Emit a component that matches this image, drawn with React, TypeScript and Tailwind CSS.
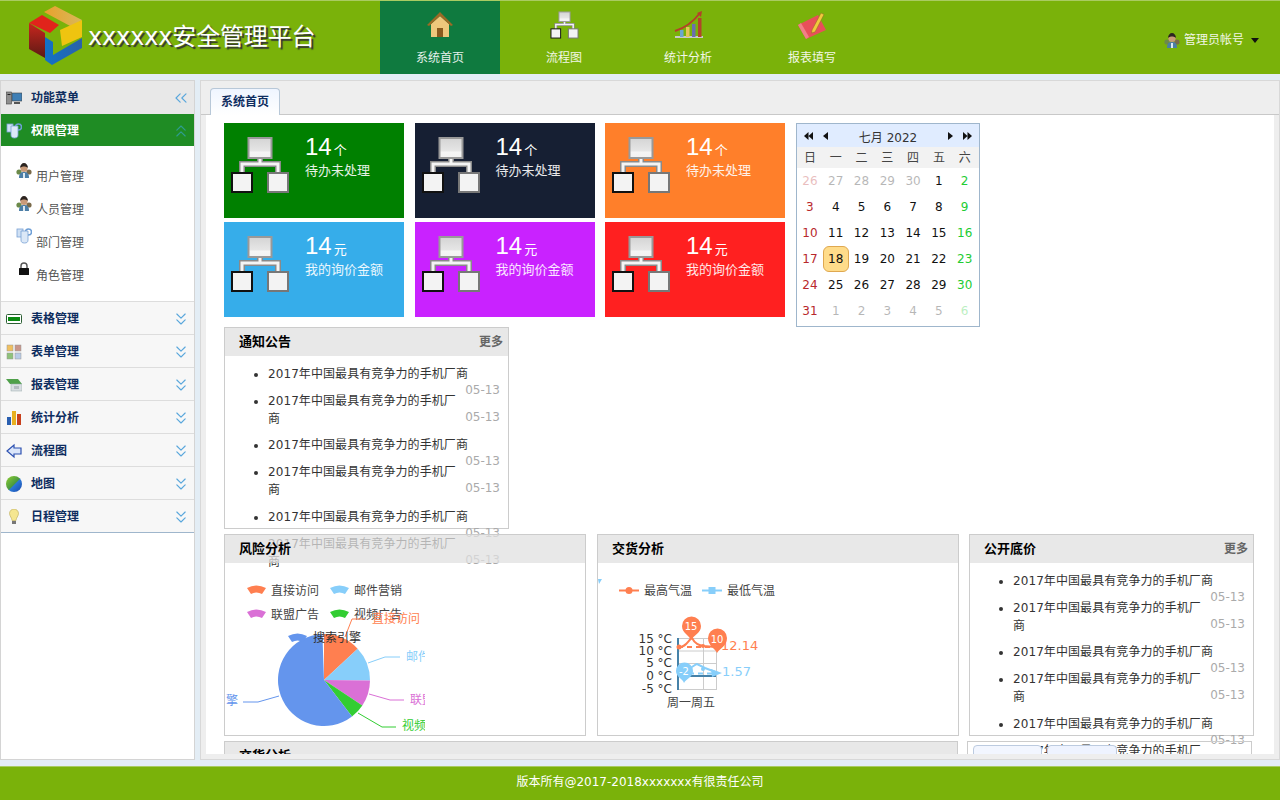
import { ChevronsDown, ChevronsLeft, ChevronsUp } from "lucide-react";
import type { ReactNode } from "react";

function Logo() {
  return (
    <svg viewBox="26 4 60 64" className="-mt-1 h-16 w-[60px] shrink-0">
      <defs>
        <linearGradient id="logoTop" x1="0" x2="1" y1="0" y2="0">
          <stop offset="0" stopColor="#e8a12c" />
          <stop offset="1" stopColor="#d8b85a" />
        </linearGradient>
        <linearGradient id="logoSide" x1="0" x2="0" y1="0" y2="1">
          <stop offset="0" stopColor="#c8261e" />
          <stop offset="1" stopColor="#5c1a14" />
        </linearGradient>
        <linearGradient id="logoBlue" x1="0" x2="1" y1="0" y2="0">
          <stop offset="0" stopColor="#1272c8" />
          <stop offset="1" stopColor="#2a62a8" />
        </linearGradient>
      </defs>
      <polygon points="44,12 55,6 82,20 72,27" fill="url(#logoTop)" />
      <polygon points="29,23 42,15 59,25 50,33" fill="#e1241b" />
      <polygon points="29,23 45,33 45,58 29,49" fill="url(#logoSide)" />
      <polygon points="60,30 82,20 82,37 62,46" fill="#efc410" />
      <polygon points="45,37 53,42 53,55 82,38 82,48 52,65 45,60" fill="url(#logoBlue)" />
    </svg>
  );
}

function FlowIcon({ className }: { className: string }) {
  return (
    <svg viewBox="0 0 60 58" className={className}>
      <defs>
        <linearGradient id="flowBox" x1="0" x2="0" y1="0" y2="1">
          <stop offset="0" stopColor="#d4d4d4" />
          <stop offset="0.65" stopColor="#e6e6e6" />
          <stop offset="0.7" stopColor="#f5f5f5" />
          <stop offset="1" stopColor="#f2f2f2" />
        </linearGradient>
      </defs>
      <path d="M30 22v6M12 37v-9h36v9" fill="none" stroke="#8a8a8a" strokeWidth="6" />
      <path d="M30 22v6M12 37v-9h36v9" fill="none" stroke="#f4f4f4" strokeWidth="3" />
      <rect x="18.5" y="2" width="23" height="20" fill="url(#flowBox)" stroke="#999" strokeWidth="2" />
      <rect x="2" y="37" width="20" height="19" fill="#f3f3f3" stroke="#111" strokeWidth="2" />
      <rect x="38" y="37" width="20" height="19" fill="#f3f3f3" stroke="#777" strokeWidth="2" />
    </svg>
  );
}

function HouseIcon() {
  return (
    <svg viewBox="0 0 28 28" className="h-7 w-7">
      <path d="M5 13v13h18V13L14 5z" fill="#eec77c" />
      <path d="M1 14 14 1l13 13-2 1L14 5 3 15z" fill="#9a6a26" />
      <rect x="11" y="17" width="6" height="9" fill="#8a5a1e" />
    </svg>
  );
}

function ChartIcon() {
  return (
    <svg viewBox="0 0 30 30" className="h-[30px] w-[30px]">
      <rect x="2" y="26" width="28" height="2" fill="#c9c9c9" />
      <rect x="7" y="20" width="3.5" height="7" fill="#6ba7d0" />
      <rect x="13" y="17" width="3.5" height="10" fill="#e5c45a" />
      <rect x="19" y="14" width="3.5" height="13" fill="#6a6fb0" />
      <rect x="25" y="8" width="3.5" height="19" fill="#b2452a" />
      <path d="M2 21C12 18 20 12 27 3" fill="none" stroke="#b5402a" strokeWidth="2" />
      <polygon points="24,3 29,1 28,7" fill="#b5402a" />
    </svg>
  );
}

function NoteIcon() {
  return (
    <svg viewBox="0 0 30 30" className="h-[30px] w-[30px]">
      <polygon points="1,15 21,5 29,20 9,29" fill="#e8505a" />
      <polygon points="1,15 4,13 12,27 9,29" fill="#f08088" />
      <path d="M15 20 24 3l3 1.5L18 22l-3.5 1z" fill="#f2c83c" stroke="#8a6a20" strokeWidth="0.5" />
    </svg>
  );
}

function UserIcon() {
  return (
    <svg viewBox="0 0 16 16" className="h-4 w-4">
      <circle cx="3" cy="10" r="2.6" fill="#6c8a4a" />
      <circle cx="13" cy="10" r="2.6" fill="#7a6a4a" />
      <path d="M3 16c0-5 2-6 5-6s5 1 5 6z" fill="#4c7ea6" />
      <rect x="7" y="11" width="2" height="5" fill="#dde8f0" />
      <circle cx="8" cy="6.5" r="3.6" fill="#c99a78" />
      <path d="M4 6c0-3 2-5 4-5s4 2 4 5c-2-2-6-2-8 0z" fill="#2c2420" />
    </svg>
  );
}

function CupsIcon() {
  return (
    <svg viewBox="0 0 16 16" className="h-4 w-4">
      <circle cx="12.5" cy="4" r="3" fill="none" stroke="#6f9fd6" strokeWidth="1.5" />
      <rect x="1" y="1" width="6" height="8" fill="#cfe0f4" stroke="#7aa2d4" strokeWidth="0.8" />
      <path d="M5 3h7v9c0 2-1 3-3.5 3S5 14 5 12z" fill="#dbe8f7" stroke="#7aa2d4" strokeWidth="0.8" />
    </svg>
  );
}

function LockIcon() {
  return (
    <svg viewBox="0 0 16 16" className="h-4 w-4">
      <path d="M5 7V5a3 3 0 0 1 6 0v2" fill="none" stroke="#555" strokeWidth="1.4" />
      <rect x="3" y="7" width="10" height="7" rx="0.5" fill="#111" />
    </svg>
  );
}

const menuIcons: Record<string, ReactNode> = {
  desk: (
    <svg viewBox="0 0 16 16" className="h-4 w-4">
      <rect x="0.5" y="2" width="5" height="12" fill="#8e8e8e" stroke="#444" strokeWidth="0.6" />
      <rect x="1.5" y="4" width="3" height="1" fill="#222" />
      <rect x="6" y="3" width="10" height="8" fill="#3f7fb5" stroke="#444" strokeWidth="0.6" />
      <rect x="8" y="12" width="6" height="2" fill="#555" />
    </svg>
  ),
  table: (
    <svg viewBox="0 0 16 16" className="h-4 w-4">
      <rect x="0.5" y="3.5" width="15" height="9" rx="1" fill="#fff" stroke="#2b5f33" />
      <rect x="2" y="6" width="12" height="4" fill="#0b8a12" />
    </svg>
  ),
  form: (
    <svg viewBox="0 0 16 16" className="h-4 w-4">
      <rect x="1" y="1" width="6" height="6" fill="#f0c060" stroke="#999" strokeWidth="0.5" />
      <rect x="9" y="1" width="6" height="6" fill="#c9968a" stroke="#999" strokeWidth="0.5" />
      <rect x="1" y="9" width="6" height="6" fill="#8fc27a" stroke="#999" strokeWidth="0.5" />
      <rect x="9" y="9" width="6" height="6" fill="#b8cbe6" stroke="#999" strokeWidth="0.5" />
    </svg>
  ),
  report: (
    <svg viewBox="0 0 16 16" className="h-4 w-4">
      <polygon points="0,2 12,2 16,7 4,7" fill="#4fa04a" />
      <rect x="5" y="7" width="11" height="7" fill="#d9dee2" stroke="#9aa" strokeWidth="0.5" />
      <rect x="8" y="9" width="5" height="3" fill="#b5bcc2" />
    </svg>
  ),
  bars: (
    <svg viewBox="0 0 16 16" className="h-4 w-4">
      <rect x="1" y="7" width="4" height="8" fill="#2a5fb0" />
      <rect x="6" y="1" width="4" height="14" fill="#e8b020" />
      <rect x="11" y="4" width="4" height="11" fill="#c8401c" />
    </svg>
  ),
  back: (
    <svg viewBox="0 0 16 16" className="h-4 w-4">
      <path d="M1 8 8 2v3h7v6H8v3z" fill="#dbe6fa" stroke="#2c50b0" strokeWidth="1.2" />
    </svg>
  ),
  globe: (
    <svg viewBox="0 0 16 16" className="h-4 w-4">
      <defs>
        <linearGradient id="globeFill" x1="0" x2="1" y1="0" y2="1">
          <stop offset="0" stopColor="#8fd030" />
          <stop offset="0.5" stopColor="#4a9a40" />
          <stop offset="0.55" stopColor="#2a78d8" />
          <stop offset="1" stopColor="#1a48a8" />
        </linearGradient>
      </defs>
      <circle cx="8" cy="8" r="8" fill="url(#globeFill)" />
    </svg>
  ),
  bulb: (
    <svg viewBox="0 0 16 16" className="h-4 w-4">
      <path d="M8 0a4.5 4.5 0 0 0-4.5 4.5C3.500 7 6 9 6 11.500h4C10 9 12.500 7 12.500 4.500A4.500 4.500 0 0 0 8 0z" fill="#f5e690" stroke="#b8a850" strokeWidth="0.6" />
      <rect x="6" y="12" width="4" height="3" fill="#777" />
    </svg>
  ),
};

const accordions = [
  { label: "表格管理", icon: "table" },
  { label: "表单管理", icon: "form" },
  { label: "报表管理", icon: "report" },
  { label: "统计分析", icon: "bars" },
  { label: "流程图", icon: "back" },
  { label: "地图", icon: "globe" },
  { label: "日程管理", icon: "bulb" },
];

const subItems = [
  { label: "用户管理", icon: <UserIcon /> },
  { label: "人员管理", icon: <UserIcon /> },
  { label: "部门管理", icon: <CupsIcon /> },
  { label: "角色管理", icon: <LockIcon /> },
];

const navItems = [
  { label: "系统首页", icon: <HouseIcon />, active: true },
  { label: "流程图", icon: <FlowIcon className="h-7 w-[29px]" /> },
  { label: "统计分析", icon: <ChartIcon /> },
  { label: "报表填写", icon: <NoteIcon /> },
];

const tiles = [
  { bg: "bg-[#008000]", unit: "个", label: "待办未处理" },
  { bg: "bg-[#161f33]", unit: "个", label: "待办未处理" },
  { bg: "bg-[#ff7f2a]", unit: "个", label: "待办未处理" },
  { bg: "bg-[#36adea]", unit: "元", label: "我的询价金额" },
  { bg: "bg-[#c922ff]", unit: "元", label: "我的询价金额" },
  { bg: "bg-[#ff2020]", unit: "元", label: "我的询价金额" },
];

const calendarDays = [
  26, 27, 28, 29, 30, 1, 2, 3, 4, 5, 6, 7, 8, 9, 10, 11, 12, 13, 14, 15, 16, 17, 18, 19, 20, 21, 22, 23, 24, 25, 26, 27,
  28, 29, 30, 31, 1, 2, 3, 4, 5, 6,
];

function Calendar() {
  return (
    <div className="h-[204px] w-[184px] shrink-0 border border-[#9fb6cc] bg-white">
      <div className="flex h-[23px] items-center justify-between bg-[#e0ecff] px-[7px] text-[#333]">
        <span className="flex items-center gap-[10px]">
          <svg viewBox="0 0 9 8" className="h-2 w-[9px]">
            <path d="M4.500 0v8L0 4zM9 0v8L4.500 4z" fill="#111" />
          </svg>
          <svg viewBox="0 0 5 8" className="h-2 w-[5px]">
            <path d="M5 0v8L0 4z" fill="#111" />
          </svg>
        </span>
        <span className="pt-[5px]">七月 2022</span>
        <span className="flex items-center gap-[10px]">
          <svg viewBox="0 0 5 8" className="h-2 w-[5px]">
            <path d="M0 0v8l5-4z" fill="#111" />
          </svg>
          <svg viewBox="0 0 9 8" className="h-2 w-[9px]">
            <path d="M0 0v8l4.500-4zM4.500 0v8L9 4z" fill="#111" />
          </svg>
        </span>
      </div>
      <div className="grid h-[21px] grid-cols-[repeat(7,25.8px)] items-center bg-[#f2f2f2] text-center text-[#444]">
        {["日", "一", "二", "三", "四", "五", "六"].map((day) => (
          <span key={day}>{day}</span>
        ))}
      </div>
      <div className="grid grid-cols-[repeat(7,25.8px)] auto-rows-[26px] text-center">
        {calendarDays.map((day, index) => {
          const muted = index < 5 || index > 35;
          const color = index % 7 === 0 ? "text-[#b8282c]" : index % 7 === 6 ? "text-[#22cc33]" : "text-[#111]";
          const selected = index === 22;
          return (
            <span
              key={index}
              className={`flex items-center justify-center ${color} ${muted ? "opacity-30" : ""} ${
                selected ? "rounded-md border border-[#dfa850] bg-[#ffdc8a]" : ""
              }`}
            >
              {day}
            </span>
          );
        })}
      </div>
    </div>
  );
}

function NewsList() {
  return (
    <ul className="list-disc pt-[10px] pr-2 pl-[43px] leading-[17.83px] text-[#333]">
      {[0, 1, 2, 3, 4, 5].map((item) => (
        <li key={item} className="mb-[9px] tracking-[0.08px]">
          2017年中国最具有竞争力的手机厂商
          <span className="float-right -mt-[2px] tracking-normal text-[#aaa]">05-13</span>
        </li>
      ))}
    </ul>
  );
}

function Panel({
  title,
  more,
  className,
  children,
}: {
  title: string;
  more?: boolean;
  className: string;
  children: ReactNode;
}) {
  return (
    <section className={`h-[202px] shrink-0 border border-[#ccc] ${className}`}>
      <header className="flex h-7 items-center justify-between bg-[#e0e0e0]/75 pr-[5px] pl-[14px]">
        <h3 className="text-[13px] font-bold text-black">{title}</h3>
        {more && <span className="font-bold text-[#666]">更多</span>}
      </header>
      {children}
    </section>
  );
}

function polar(angle: number, radius: number) {
  const rad = ((angle - 90) * Math.PI) / 180;
  return `${324 + radius * Math.cos(rad)} ${680 + radius * Math.sin(rad)}`;
}

const slices = [
  { from: 0, to: 47, fill: "#ff7f50" },
  { from: 47, to: 90.6, fill: "#87cefa" },
  { from: 90.6, to: 123.5, fill: "#da70d6" },
  { from: 123.5, to: 142.5, fill: "#32cd32" },
  { from: 142.5, to: 358, fill: "#6495ed" },
];

function Fan({ x, y, fill }: { x: number; y: number; fill: string }) {
  return (
    <path
      d={`M${x} ${y - 2}q9.500-5 19 0l-4 6q-5.500-3-11 0z`}
      fill={fill}
    />
  );
}

function PieChart() {
  return (
    <svg viewBox="225 563 200 172" className="block h-[172px] w-[200px]">
      <Fan x={247} y={590} fill="#ff7f50" />
      <Fan x={330} y={590} fill="#87cefa" />
      <Fan x={247} y={614} fill="#da70d6" />
      <Fan x={330} y={614} fill="#32cd32" />
      <g fontSize="12" fill="#444">
        <text x="271" y="595">直接访问</text>
        <text x="354" y="595">邮件营销</text>
        <text x="271" y="619">联盟广告</text>
        <text x="354" y="619">视频广告</text>
      </g>
      {slices.map((slice) => (
        <path
          key={slice.fill}
          d={`M324 680L${polar(slice.from, 46)}A46 46 0 ${slice.to - slice.from > 180 ? 1 : 0} 1 ${polar(slice.to, 46)}Z`}
          fill={slice.fill}
        />
      ))}
      <Fan x={288} y={638} fill="#6495ed" />
      <g fill="none" strokeWidth="1">
        <path d="M345 637 352 619H365" stroke="#ff7f50" />
        <path d="M368 663 385 657H400" stroke="#87cefa" />
        <path d="M369 694 390 700H404" stroke="#da70d6" />
        <path d="M358 713 382 727H396" stroke="#32cd32" />
        <path d="M279 696 258 702H243" stroke="#6495ed" />
      </g>
      <g fontSize="12">
        <text x="372" y="623" fill="#ff7f50">直接访问</text>
        <text x="406" y="661" fill="#87cefa">邮件营销</text>
        <text x="410" y="704" fill="#da70d6">联盟广告</text>
        <text x="402" y="730" fill="#32cd32">视频广告</text>
        <text x="190" y="705" fill="#6495ed">搜索引擎</text>
        <text x="313" y="642" fill="#333">搜索引擎</text>
      </g>
    </svg>
  );
}

function LineChart() {
  return (
    <svg viewBox="598 563 200 172" className="block h-[172px] w-[200px]">
      <polygon points="598,579 602,579 599,584" fill="#87cefa" />
      <path d="M619 590.500H639" stroke="#ff7f50" strokeWidth="2" />
      <circle cx="629" cy="590.500" r="3.500" fill="#ff7f50" />
      <path d="M702 590.500H722" stroke="#87cefa" strokeWidth="2" />
      <rect x="708.500" y="587" width="7" height="7" fill="#87cefa" />
      <g fontSize="12" fill="#444">
        <text x="644" y="595">最高气温</text>
        <text x="727" y="595">最低气温</text>
      </g>
      <g fontSize="12" fill="#333" textAnchor="end">
        <text x="672" y="643">15 °C</text>
        <text x="672" y="655">10 °C</text>
        <text x="672" y="667">5 °C</text>
        <text x="672" y="680">0 °C</text>
        <text x="672" y="693">-5 °C</text>
      </g>
      <path d="M678 638.500H716.500M678 651H716.500M678 663.500H716.500M678 689.500H716.500M703.500 638V690M716.500 638V690" stroke="#ccc" fill="none" />
      <path d="M678 638V690" stroke="#4682a9" strokeWidth="2" />
      <path d="M678 676H716" stroke="#4682a9" strokeWidth="2" />
      <path d="M678 647C686 648 688 640 692 638C695 644 699 645 703 646L716 647" fill="none" stroke="#ff7f50" strokeWidth="2" />
      <path d="M678 647H716" stroke="#ff7f50" strokeWidth="2" strokeDasharray="5 4" />
      <circle cx="679" cy="647" r="2.500" fill="#ff7f50" />
      <circle cx="703" cy="646" r="2" fill="#ff7f50" />
      <path d="M691 640c-2-5-9-7-9-14a9.500 9.500 0 0 1 19 0c0 7-7 9-10 14z" fill="#ff7f50" />
      <path d="M717 653c-2-5-9-7-9-15a9.500 9.500 0 0 1 19 0c0 8-7 10-10 15z" fill="#ff7f50" />
      <path d="M678 674C690 670 695 664 697 664L705 668L718 673" fill="none" stroke="#87cefa" strokeWidth="2" />
      <path d="M680 673.500H716" stroke="#87cefa" strokeWidth="2" strokeDasharray="5 4" />
      <circle cx="703" cy="669" r="2" fill="#87cefa" />
      <polygon points="711,669 722,673 712,677" fill="#87cefa" />
      <path d="M684 683c-1-4-8-6-8-12a8.500 8.500 0 0 1 17 0c0 6-7 8-9 12z" fill="#87cefa" />
      <g fontSize="10" fill="#fff" textAnchor="middle">
        <text x="691" y="630">15</text>
        <text x="717" y="643">10</text>
        <text x="684" y="675">-2</text>
      </g>
      <g fontSize="13">
        <text x="721" y="650" fill="#ff7f50">12.14</text>
        <text x="722" y="676" fill="#87cefa">1.57</text>
      </g>
      <text x="667" y="707" fontSize="12" fill="#444">周一周五</text>
    </svg>
  );
}

export default function App() {
  return (
    <div className="flex h-screen flex-col overflow-hidden bg-[#e3edf5] text-xs [font-family:'DejaVu_Sans','Noto_Sans_CJK_SC',sans-serif]">
      <header className="flex h-[74px] shrink-0 border-t border-[#a9cb62] bg-[#7ab20a]">
        <div className="flex w-[380px] shrink-0 items-center pl-[26px]">
          <Logo />
          <h1 className="-mt-[2px] ml-[2px] text-2xl tracking-[-0.15px] whitespace-nowrap text-white [text-shadow:2px_2px_1px_#333]">
            xxxxxx安全管理平台
          </h1>
        </div>
        <nav className="flex gap-1">
          {navItems.map((item) => (
            <a
              key={item.label}
              className={`flex w-[120px] flex-col items-center pt-2 text-white/90 ${item.active ? "bg-[#0f7a3f]" : ""}`}
            >
              <span className="flex h-[31px] items-center">{item.icon}</span>
              <span className="mt-[9px] leading-[18px]">{item.label}</span>
            </a>
          ))}
        </nav>
        <div className="mt-[29px] ml-auto flex h-5 items-center pr-[21px] text-white/90">
          <UserIcon />
          <span className="ml-[4px]">管理员帐号</span>
          <svg viewBox="0 0 8 5" className="ml-[7px] h-[5px] w-2">
            <path d="M0 0h8L4 5z" fill="#111" />
          </svg>
        </div>
      </header>

      <div className="my-[6px] flex min-h-0 flex-1 gap-[5px]">
        <aside className="w-[195px] shrink-0 border border-[#d4d4d4] bg-white">
          <div className="flex h-[33px] items-center bg-[#e8e8e8] pr-[3px] pl-[5px] font-bold text-[#0e2d5f]">
            {menuIcons.desk}
            <span className="ml-[9px]">功能菜单</span>
            <ChevronsLeft className="ml-auto h-5 w-5 text-[#5aa7dc]" strokeWidth={1.4} />
          </div>
          <div className="flex h-[32px] items-center bg-[#1f8c24] pt-px pr-[3px] pl-[5px] font-bold text-white">
            <CupsIcon />
            <span className="ml-[9px]">权限管理</span>
            <ChevronsUp className="ml-auto h-5 w-5 text-[#2f9c8f]" strokeWidth={1.4} />
          </div>
          <ul className="h-[155px] pt-4 pl-[15px] text-[#555]">
            {subItems.map((item) => (
              <li key={item.label} className="flex h-[33px] items-start">
                {item.icon}
                <span className="mt-[6px] ml-[4px] leading-[18px]">{item.label}</span>
              </li>
            ))}
          </ul>
          <div className="border-b border-[#9fb6cc]">
            {accordions.map((item) => (
              <div
                key={item.label}
                className="flex h-[33px] items-center border-t border-[#ddd] bg-[#f7f7f7] pt-px pr-[3px] pl-[5px] font-bold text-[#0e2d5f]"
              >
                {menuIcons[item.icon]}
                <span className="ml-[9px]">{item.label}</span>
                <ChevronsDown className="ml-auto h-5 w-5 text-[#5aa7dc]" strokeWidth={1.4} />
              </div>
            ))}
          </div>
        </aside>

        <main className="flex min-w-0 flex-1 flex-col border border-[#d8d8d8] bg-[#eeeeee] pb-[5px]">
          <div className="flex h-[34px] shrink-0 items-end border-b border-[#c8c8c8] pl-[9px]">
            <div className="-mb-px flex h-[27px] w-[70px] items-center justify-center rounded-t border border-b-0 border-[#b8c8d8] bg-gradient-to-b from-[#eff5ff] to-white font-bold text-[#0e2d5f]">
              系统首页
            </div>
          </div>
          <div className="mx-[5px] min-h-0 flex-1 overflow-hidden bg-white pt-2 pl-[18px]">
            <div className="flex h-[204px] items-start gap-[11px]">
              <div className="grid shrink-0 grid-cols-[repeat(3,180px)] gap-x-[10.5px] gap-y-1">
                {tiles.map((tile, index) => (
                  <div key={index} className={`flex h-[95px] pt-[13px] pl-[6px] text-white ${tile.bg}`}>
                    <FlowIcon className="h-[58px] w-[60px] shrink-0" />
                    <div className="-mt-[5px] ml-[15px]">
                      <p className="leading-[22px]">
                        <span className="text-2xl [font-family:'Liberation_Sans',sans-serif]">14</span>
                        <span className="ml-[2px] text-[13px]">{tile.unit}</span>
                      </p>
                      <p className="-mt-px text-[13px] leading-[18px] text-white/90">{tile.label}</p>
                    </div>
                  </div>
                ))}
              </div>
              <Calendar />
            </div>

            <Panel title="通知公告" more className="w-[285px]">
              <NewsList />
            </Panel>

            <div className="mt-[5px] flex">
              <Panel title="风险分析" className="relative w-[362px]">
                <PieChart />
              </Panel>
              <Panel title="交货分析" className="relative ml-[11px] w-[362px]">
                <LineChart />
              </Panel>
              <Panel title="公开底价" more className="ml-[10px] w-[285px]">
                <NewsList />
              </Panel>
            </div>

            <div className="mt-[5px] flex">
              <Panel title="交货分析" className="relative w-[734px]">
                <div />
              </Panel>
              <section className="relative ml-[9px] h-[202px] w-[285px] shrink-0 border border-[#ccc] pt-[3px] pl-[5px]">
                <div className="flex gap-[5px]">
                  <div className="h-8 w-[69px] rounded-t border border-[#bccbe0] bg-[#f2f6ff]" />
                  <div className="h-8 w-[70px] rounded-t border border-[#bccbe0] bg-[#eef3ff]" />
                </div>
              </section>
            </div>
          </div>
        </main>
      </div>

      <footer className="flex h-[34px] shrink-0 items-center justify-center border-t border-[#a9cb62] bg-[#7ab20a] pb-[3px] text-white">
        版本所有@2017-2018xxxxxxx有很责任公司
      </footer>
    </div>
  );
}
